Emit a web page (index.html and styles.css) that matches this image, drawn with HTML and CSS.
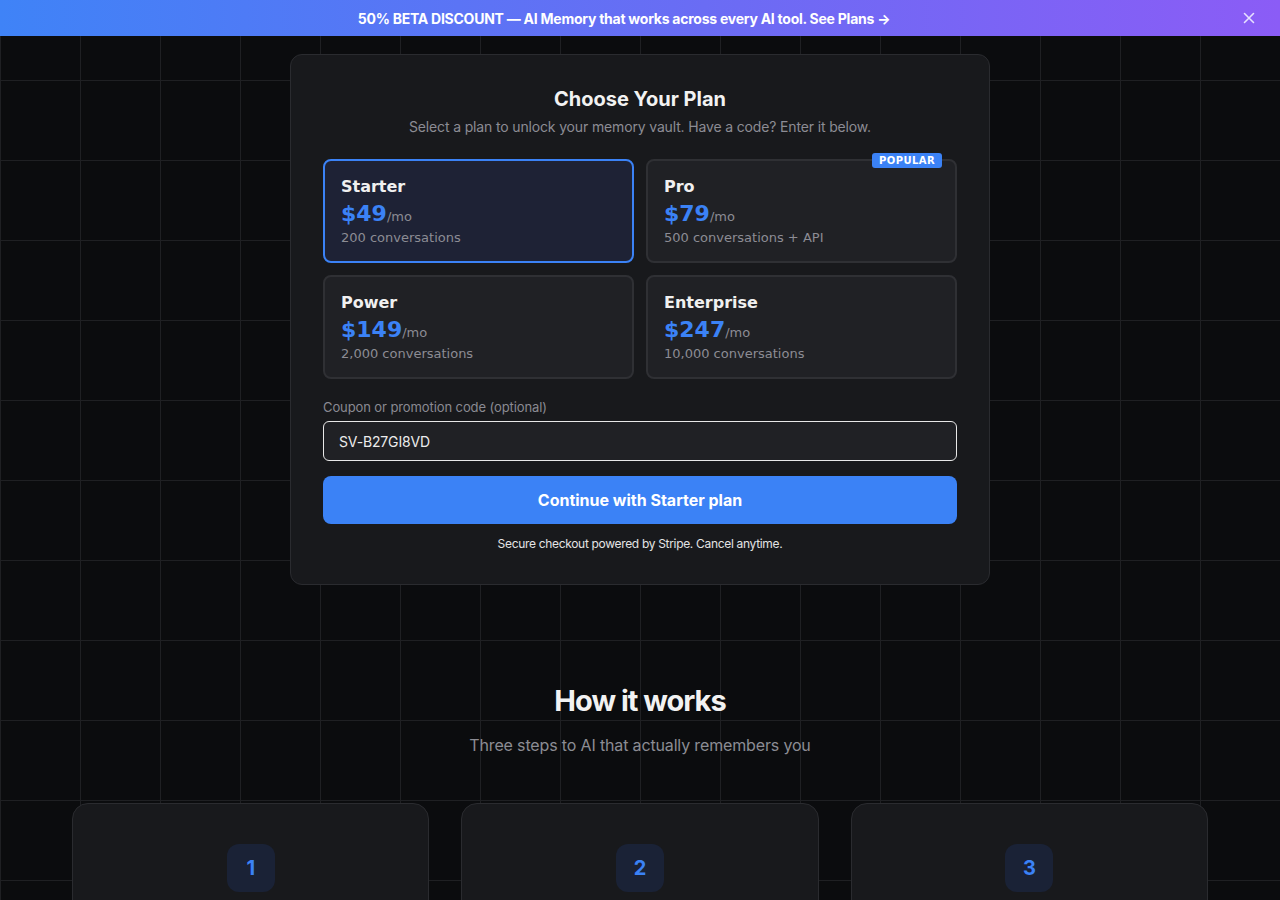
FILE: index.html
```html
<!DOCTYPE html>
<html lang="en">
<head>
  <meta charset="UTF-8">
  <meta name="viewport" content="width=device-width, initial-scale=1.0">
  <title>Choose Your Plan</title>
  <link rel="stylesheet" href="styles.css">
</head>
<body>
  <div class="promo-bar">
    <a href="#plans" class="promo-text">50% BETA DISCOUNT — AI Memory that works across every AI tool. See Plans →</a>
    <button class="promo-close" aria-label="Close">
      <svg width="12" height="12" viewBox="0 0 12 12"><path d="M1.5 1.5l9 9M10.5 1.5l-9 9" stroke="currentColor" stroke-width="1.6" stroke-linecap="round"/></svg>
    </button>
  </div>

  <main class="page">
    <section class="plan-panel" id="plans">
      <h1 class="plan-title">Choose Your Plan</h1>
      <p class="plan-subtitle">Select a plan to unlock your memory vault. Have a code? Enter it below.</p>

      <div class="plan-grid">
        <div class="plan selected">
          <div class="plan-name">Starter</div>
          <div class="plan-price">$49<span>/mo</span></div>
          <div class="plan-desc">200 conversations</div>
        </div>
        <div class="plan">
          <span class="badge">POPULAR</span>
          <div class="plan-name">Pro</div>
          <div class="plan-price">$79<span>/mo</span></div>
          <div class="plan-desc">500 conversations + API</div>
        </div>
        <div class="plan">
          <div class="plan-name">Power</div>
          <div class="plan-price">$149<span>/mo</span></div>
          <div class="plan-desc">2,000 conversations</div>
        </div>
        <div class="plan">
          <div class="plan-name">Enterprise</div>
          <div class="plan-price">$247<span>/mo</span></div>
          <div class="plan-desc">10,000 conversations</div>
        </div>
      </div>

      <label class="coupon-label" for="coupon">Coupon or promotion code (optional)</label>
      <input class="coupon-input" id="coupon" type="text" value="SV-B27GI8VD">

      <button class="continue-btn">Continue with Starter plan</button>
      <p class="secure-note">Secure checkout powered by Stripe. Cancel anytime.</p>
    </section>

    <section class="how">
      <h2 class="how-title">How it works</h2>
      <p class="how-subtitle">Three steps to AI that actually remembers you</p>
      <div class="steps">
        <div class="step"><div class="step-num">1</div></div>
        <div class="step"><div class="step-num">2</div></div>
        <div class="step"><div class="step-num">3</div></div>
      </div>
    </section>
  </main>
</body>
</html>
```

FILE: styles.css
```css
* {
  box-sizing: border-box;
}

body {
  margin: 0;
  font-family: 'Inter', 'Liberation Sans', sans-serif;
  letter-spacing: -0.15px;
  color: #ededed;
  background-color: #0b0c0e;
  background-image:
    linear-gradient(to right, #1f2023 1px, transparent 1px),
    linear-gradient(to bottom, #1f2023 1px, transparent 1px);
  background-size: 80px 80px;
  min-height: 100vh;
}

.promo-bar {
  height: 36px;
  display: flex;
  align-items: center;
  justify-content: center;
  padding: 0 48px 0 16px;
  background: linear-gradient(90deg, #3f83f7 0%, #6a6cf4 55%, #8b5cf6 100%);
  position: relative;
}

.promo-text {
  color: #ffffff;
  font-size: 14px;
  font-weight: 700;
  text-decoration: none;
  letter-spacing: -0.25px;
}

.promo-close {
  position: absolute;
  right: 24px;
  top: 11px;
  width: 14px;
  height: 14px;
  padding: 0;
  border: none;
  background: none;
  color: #e6e0ff;
  display: flex;
  align-items: center;
  justify-content: center;
  cursor: pointer;
}

.page {
  padding-top: 18px;
}

.plan-panel {
  width: 700px;
  margin: 0 auto;
  padding: 32px;
  background: #18191c;
  border: 1px solid #2a2b2f;
  border-radius: 12px;
}

.plan-title {
  margin: 0;
  font-size: 20px;
  line-height: 24px;
  font-weight: 700;
  text-align: center;
  color: #f2f2f2;
  letter-spacing: 0;
}

.plan-subtitle {
  margin: 6px 0 22px;
  font-size: 14px;
  line-height: 20px;
  text-align: center;
  color: #8c8c94;
}

.plan-grid {
  display: grid;
  grid-template-columns: 1fr 1fr;
  gap: 12px;
}

.plan {
  position: relative;
  height: 104px;
  padding: 16px 16px 14px;
  background: #202125;
  border: 2px solid #2f3034;
  border-radius: 8px;
  font-family: 'DejaVu Sans', sans-serif;
  letter-spacing: 0;
  cursor: pointer;
}

.plan.selected {
  background: #1e2235;
  border-color: #3b82f6;
}

.plan-name {
  font-size: 16px;
  line-height: 20px;
  font-weight: 700;
  color: #f0f0f0;
}

.plan-price {
  margin-top: 4px;
  font-size: 22px;
  line-height: 26px;
  font-weight: 700;
  color: #3b82f6;
}

.plan-price span {
  font-size: 13px;
  font-weight: 400;
  color: #8c8c94;
}

.plan-desc {
  margin-top: 0;
  font-size: 13px;
  line-height: 16px;
  color: #8c8c94;
}

.badge {
  position: absolute;
  top: -8px;
  right: 13px;
  padding: 1px 7px;
  background: #3b82f6;
  color: #ffffff;
  font-size: 10px;
  line-height: 13px;
  font-weight: 700;
  letter-spacing: 0.4px;
  border-radius: 3px;
}

.coupon-label {
  display: block;
  margin-top: 18px;
  font-size: 13px;
  line-height: 20px;
  color: #8a8a92;
  letter-spacing: -0.1px;
}

.coupon-input {
  display: block;
  width: 100%;
  height: 40px;
  margin-top: 4px;
  padding: 0 15px;
  background: #202125;
  border: 1px solid #e8e8e8;
  border-radius: 6px;
  color: #ececec;
  font-family: inherit;
  font-size: 14px;
  letter-spacing: -0.15px;
  outline: none;
}

.continue-btn {
  display: block;
  width: 100%;
  height: 48px;
  margin-top: 15px;
  background: #3b82f6;
  border: none;
  border-radius: 8px;
  color: #ffffff;
  font-family: inherit;
  font-size: 16px;
  font-weight: 700;
  letter-spacing: 0;
  cursor: pointer;
}

.secure-note {
  margin: 12px 0 0;
  font-size: 12px;
  line-height: 16px;
  text-align: center;
  color: #e4e4e4;
  letter-spacing: -0.32px;
}

.how {
  padding: 98px 72px 0;
  text-align: center;
}

.how-title {
  margin: 0;
  font-size: 29px;
  line-height: 36px;
  font-weight: 700;
  letter-spacing: -1px;
  color: #f2f2f2;
}

.how-subtitle {
  margin: 14px 0 46px;
  font-size: 16px;
  line-height: 24px;
  color: #8c8c94;
}

.steps {
  display: grid;
  grid-template-columns: repeat(3, 1fr);
  gap: 32px;
}

.step {
  height: 200px;
  padding-top: 40px;
  background: #18191c;
  border: 1px solid #2a2b2f;
  border-radius: 16px;
}

.step-num {
  width: 48px;
  height: 48px;
  margin: 0 auto;
  display: flex;
  align-items: center;
  justify-content: center;
  background: #1a2236;
  border-radius: 12px;
  color: #3b82f6;
  font-size: 20px;
  font-weight: 700;
}
```
